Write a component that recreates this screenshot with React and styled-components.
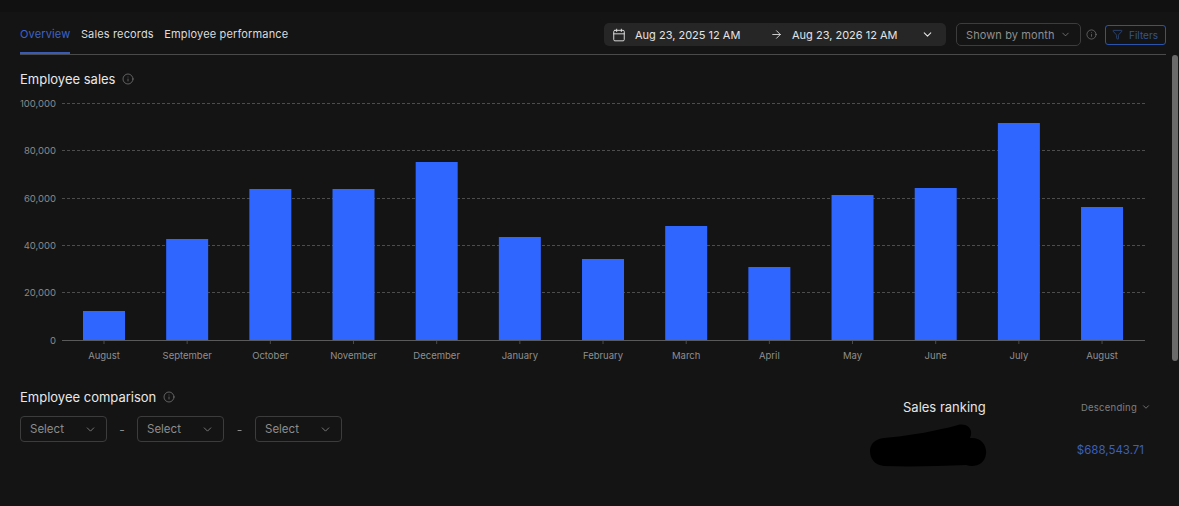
import React from "react";
import styled, { createGlobalStyle } from "styled-components";
import { ChevronDown, Calendar, ArrowRight, Info, Filter } from "lucide-react";

const Global = createGlobalStyle`
  html, body { margin: 0; padding: 0; background: #141414; }
  body { font-family: Inter, "Liberation Sans", sans-serif; overflow: hidden; }
`;

const Page = styled.div`
  position: relative;
  width: 1179px;
  height: 506px;
  overflow: hidden;
  background: #141414;
  color: #e6e6e6;
`;
const TopStrip = styled.div`
  height: 12px;
  background: #111111;
`;
const Header = styled.header`
  display: flex;
  align-items: stretch;
  justify-content: space-between;
  height: 42px;
  margin: 0 13px 0 20px;
  border-bottom: 1px solid #4a4a4a;
`;
const Tabs = styled.nav`
  display: flex;
  gap: 10.5px;
`;
const Tab = styled.div`
  display: flex;
  align-items: center;
  height: 42px;
  box-sizing: border-box;
  padding-top: 4px;
  font-size: 11px;
  letter-spacing: 0.15px;
  color: ${(p) => (p.$active ? "#3f63c4" : "#dcdcdc")};
  border-bottom: 2px solid ${(p) => (p.$active ? "#3a5bb5" : "transparent")};
`;
const Controls = styled.div`
  display: flex;
  align-items: center;
  padding-top: 3px;
`;
const DateRange = styled.div`
  display: flex;
  align-items: center;
  box-sizing: border-box;
  width: 342px;
  height: 23px;
  padding: 0 12px 0 8px;
  margin-right: 10px;
  background: #262626;
  border-radius: 5px;
  font-size: 11px;
  color: #e4e4e4;
`;
const DateText = styled.span`
  width: ${(p) => p.$w}px;
  margin-left: ${(p) => p.$ml}px;
  white-space: nowrap;
`;
const Push = styled.span`
  margin-left: auto;
  display: flex;
`;
const ShownBy = styled.div`
  display: flex;
  align-items: center;
  justify-content: space-between;
  box-sizing: border-box;
  width: 125px;
  height: 23px;
  padding: 0 9px;
  border: 1px solid #3c3c3c;
  border-radius: 5px;
  font-size: 11px;
  letter-spacing: 0.1px;
  white-space: nowrap;
  color: #8f8f8f;
`;
const InfoSlot = styled.span`
  display: inline-flex;
  margin: ${(p) => p.$m || "0"};
  color: ${(p) => p.$c || "#8a8a8a"};
`;
const FilterButton = styled.div`
  display: flex;
  align-items: center;
  gap: 6px;
  box-sizing: border-box;
  width: 61px;
  height: 20px;
  padding: 0 6px;
  border: 1px solid #2a53ad;
  border-radius: 3px;
  font-size: 10px;
  color: #35558f;
`;
const TitleRow = styled.div`
  display: flex;
  align-items: center;
  gap: 7px;
  font-size: 13px;
  line-height: 16px;
  color: #e8e8e8;
`;
const Main = styled.main`
  padding: 16px 0 0 20px;
`;
const ChartSvg = styled.svg`
  display: block;
  margin: 8px 0 0 -20px;
`;
const Bottom = styled.section`
  display: flex;
  justify-content: space-between;
  margin-top: 14px;
  padding-right: 28px;
`;
const Comparison = styled.div`
  display: flex;
  flex-direction: column;
  gap: 11px;
`;
const SelectRow = styled.div`
  display: flex;
  align-items: center;
`;
const SelectBox = styled.div`
  display: flex;
  align-items: center;
  justify-content: space-between;
  box-sizing: border-box;
  width: 87px;
  height: 26px;
  padding: 0 9px;
  border: 1px solid #3c3c3c;
  border-radius: 4px;
  font-size: 11.5px;
  color: #8c8c8c;
`;
const Dash = styled.span`
  width: ${(p) => p.$w}px;
  text-align: center;
  font-size: 12px;
  color: #8c8c8c;
`;
const Ranking = styled.div`
  position: relative;
  width: 281px;
  padding-top: 10px;
`;
const RankHead = styled.div`
  display: flex;
  align-items: center;
  justify-content: space-between;
  padding-left: 33px;
`;
const RankTitle = styled.div`
  font-size: 13px;
  line-height: 16px;
  color: #e4e4e4;
`;
const Sort = styled.div`
  display: flex;
  align-items: center;
  gap: 4px;
  font-size: 9.5px;
  letter-spacing: 0.25px;
  color: #7f7f7f;
`;
const RankRow = styled.div`
  display: flex;
  justify-content: flex-end;
  margin-top: 28px;
  padding-right: 7px;
  font-size: 11.5px;
  color: #3c5fbd;
`;
const Redaction = styled.svg`
  position: absolute;
  left: 0;
  top: 35px;
`;
const ScrollThumb = styled.div`
  position: absolute;
  right: 1px;
  top: 55px;
  width: 6px;
  height: 306px;
  border-radius: 3px;
  background: #6a6a6a;
`;

const tops = [311, 239, 189, 189, 162, 237, 259, 226, 267, 195, 188, 123, 207];
const months = ["August", "September", "October", "November", "December", "January", "February", "March", "April", "May", "June", "July", "August"];
const ticks = [["100,000", 103], ["80,000", 150], ["60,000", 198], ["40,000", 245], ["20,000", 292]];
const OY = 95;
const STEP = 83.17;

function Chart() {
  return (
    <ChartSvg width="1179" height="280" viewBox={`0 ${OY} 1179 280`}>
      {ticks.map(([l, y]) => (
        <g key={l}>
          <line x1="62" x2="1145" y1={y + 0.5} y2={y + 0.5} stroke="#4d4d4d" strokeDasharray="3 2" />
          <text x="56" y={y + 3.5} textAnchor="end" fontSize="9.5" fill="#8a8a8a" fontFamily="Inter, sans-serif">{l}</text>
        </g>
      ))}
      {tops.map((t, i) => (
        <rect key={i} x={83 + i * STEP} y={t} width="42" height={340 - t} fill="#2f66ff" />
      ))}
      <line x1="62" x2="1145" y1="340.5" y2="340.5" stroke="#5a5a5a" />
      <text x="56" y="343.5" textAnchor="end" fontSize="9.5" fill="#8a8a8a" fontFamily="Inter, sans-serif">0</text>
      {months.map((m, i) => (
        <g key={i}>
          <line x1={104 + i * STEP} x2={104 + i * STEP} y1="341" y2="344" stroke="#4a4a4a" />
          <text x={104 + i * STEP} y="358.5" textAnchor="middle" fontSize="9.5" fill="#8f8f8f" fontFamily="Inter, sans-serif">{m}</text>
        </g>
      ))}
    </ChartSvg>
  );
}

const Select = () => (
  <SelectBox>
    Select
    <ChevronDown size={13} strokeWidth={1.5} />
  </SelectBox>
);

export default function App() {
  return (
    <Page>
      <Global />
      <TopStrip />
      <Header>
        <Tabs>
          <Tab $active>Overview</Tab>
          <Tab>Sales records</Tab>
          <Tab>Employee performance</Tab>
        </Tabs>
        <Controls>
          <DateRange>
            <Calendar size={14} strokeWidth={1.6} />
            <DateText $w={135} $ml={9}>Aug 23, 2025 12 AM</DateText>
            <ArrowRight size={13} strokeWidth={1.6} />
            <DateText $w={120} $ml={9}>Aug 23, 2026 12 AM</DateText>
            <Push><ChevronDown size={13} strokeWidth={2} /></Push>
          </DateRange>
          <ShownBy>
            Shown by month
            <ChevronDown size={11} strokeWidth={1.5} />
          </ShownBy>
          <InfoSlot $m="0 8px 0 5px"><Info size={11} strokeWidth={1.3} /></InfoSlot>
          <FilterButton>
            <Filter size={11} strokeWidth={1.5} />
            Filters
          </FilterButton>
        </Controls>
      </Header>
      <Main>
        <TitleRow>
          Employee sales
          <InfoSlot><Info size={12} strokeWidth={1.3} /></InfoSlot>
        </TitleRow>
        <Chart />
        <Bottom>
          <Comparison>
            <TitleRow>
              Employee comparison
              <InfoSlot><Info size={12} strokeWidth={1.3} /></InfoSlot>
            </TitleRow>
            <SelectRow>
              <Select />
              <Dash $w={30}>-</Dash>
              <Select />
              <Dash $w={31}>-</Dash>
              <Select />
            </SelectRow>
          </Comparison>
          <Ranking>
            <RankHead>
              <RankTitle>Sales ranking</RankTitle>
              <Sort>
                Descending
                <ChevronDown size={10} strokeWidth={2} />
              </Sort>
            </RankHead>
            <RankRow>$688,543.71</RankRow>
            <Redaction width="118" height="44" viewBox="0 0 118 44">
              <path
                d="M14 14 C40 12 70 6 88 1 C97 -1 104 5 100 14 C112 13 117 22 116 30 C115 40 105 44 96 41 C70 42 40 43 14 42 C4 41 0 34 0 27 C0 20 5 15 14 14 Z"
                fill="#000"
              />
            </Redaction>
          </Ranking>
        </Bottom>
      </Main>
      <ScrollThumb />
    </Page>
  );
}
